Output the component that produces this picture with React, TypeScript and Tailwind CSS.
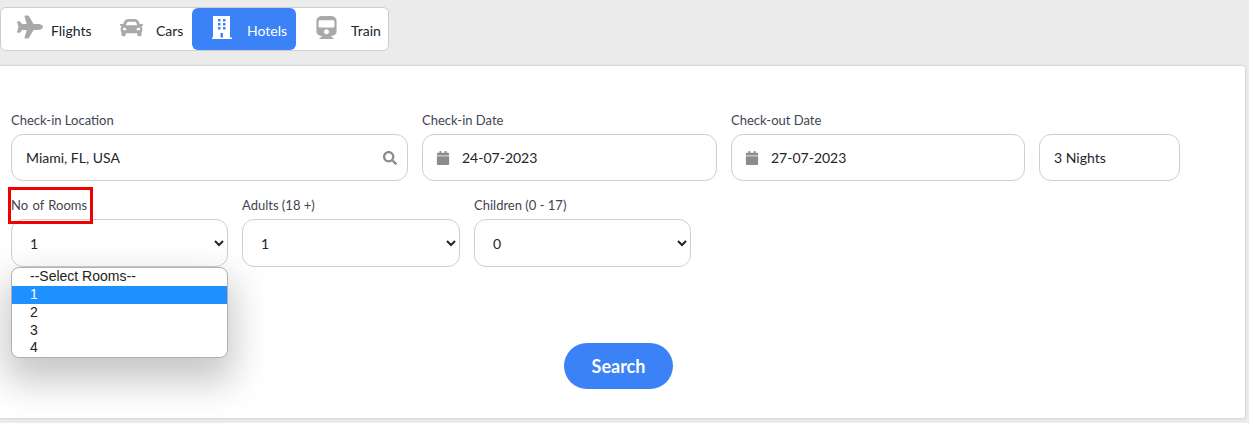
import React from "react";
import { FaPlane, FaCar, FaSearch, FaCalendar, FaTrain } from "react-icons/fa";

function HotelIcon() {
  return (
    <svg width="20" height="23" viewBox="0 0 20 23" fill="currentColor">
      <path
        fillRule="evenodd"
        d="M1 0h17v21.500h2V23H0v-1.500h1z M6 3v2.500h2.500V3z M11 3v2.500h2.500V3z M6 7v2.500h2.500V7z M11 7v2.500h2.500V7z M6 11v2.500h2.500V11z M11 11v2.500h2.500V11z M8.500 17v4.500H11V17z"
      />
    </svg>
  );
}

function Tab({
  icon,
  label,
  active,
  w,
  pl,
  iconW,
}: {
  icon: React.ReactNode;
  label: string;
  active?: boolean;
  w: string;
  pl: string;
  iconW: string;
}) {
  return (
    <div className={`flex h-[42px] items-center rounded-md ${w} ${pl} ${active ? "bg-[#3b82f6] text-white" : "text-[#212529]"}`}>
      <span className={`flex ${iconW} -translate-y-[2px] ${active ? "text-white" : "text-[#a9a9a9]"}`}>{icon}</span>
      <span className="mt-[3px] text-[14px] leading-none">{label}</span>
    </div>
  );
}

function Label({ children }: { children: React.ReactNode }) {
  return <div className="mb-[7px] h-[14px] text-[13px] leading-[15px] text-[#3f4550]">{children}</div>;
}

function DateField({ label, value, w }: { label: string; value: string; w: string }) {
  return (
    <div className={w}>
      <Label>{label}</Label>
      <div className="flex h-[47px] items-center rounded-[12px] border border-[#cfcfcf] pl-[13px] text-[14px] text-[#212529]">
        <FaCalendar className="mr-[12px] text-[#8c8c8c]" size={14} />
        <span>{value}</span>
      </div>
    </div>
  );
}

function SelectField({ label, value, w, options }: { label: React.ReactNode; value: string; w: string; options: string[] }) {
  return (
    <div className={w}>
      <Label>{label}</Label>
      <select
        defaultValue={value}
        className="h-[48px] w-full rounded-[12px] border border-[#cfcfcf] bg-white pl-[14px] pr-[1px] font-['Lato',sans-serif] text-[14px] text-[#212529] outline-none [appearance:auto]"
      >
        {options.map((o) => (
          <option key={o}>{o}</option>
        ))}
      </select>
    </div>
  );
}

export default function App() {
  return (
    <div className="relative h-[423px] w-[1249px] overflow-hidden bg-[#ebebeb] font-['Lato',sans-serif]">
      <div className="pt-[7px]">
        <div className="flex h-[44px] w-[389px] items-center rounded-md border border-[#cdcdcd] bg-white">
          <Tab w="w-[99px]" pl="pl-[16px]" iconW="w-[34px]" icon={<FaPlane size={26} />} label="Flights" />
          <Tab w="w-[92px]" pl="pl-[20px]" iconW="w-[36px]" icon={<FaCar size={23} />} label="Cars" />
          <Tab w="w-[104px]" pl="pl-[20px]" iconW="w-[35px]" active icon={<HotelIcon />} label="Hotels" />
          <Tab w="w-[92px]" pl="pl-[19px]" iconW="w-[36px]" icon={<FaTrain size={23} />} label="Train" />
        </div>
      </div>

      <div className="relative mt-[15px] h-[352px] w-[1245px] rounded-r-[3px] bg-white px-[11px] pt-[47px] shadow-[0_0_3px_rgba(0,0,0,0.2)]">
        <div className="flex gap-[14px]">
          <div className="w-[397px]">
            <Label>Check-in Location</Label>
            <div className="flex h-[47px] items-center justify-between rounded-[12px] border border-[#cfcfcf] pl-[14px] pr-[10px] text-[14px] text-[#212529]">
              <span>Miami, FL, USA</span>
              <FaSearch className="text-[#8c8c8c]" size={14} />
            </div>
          </div>
          <DateField w="w-[295px]" label="Check-in Date" value="24-07-2023" />
          <DateField w="w-[294px]" label="Check-out Date" value="27-07-2023" />
          <div className="w-[141px] pt-[21px]">
            <div className="flex h-[47px] items-center rounded-[12px] border border-[#cfcfcf] pl-[14px] text-[14px] text-[#212529]">3 Nights</div>
          </div>
        </div>

        <div className="mt-[17px] flex gap-[14px]">
          <SelectField
            w="w-[217px]"
            label={<span className="[word-spacing:1px]">No of Rooms</span>}
            value="1"
            options={["--Select Rooms--", "1", "2", "3", "4"]}
          />
          <SelectField w="w-[218px]" label="Adults (18 +)" value="1" options={["1", "2", "3", "4"]} />
          <SelectField w="w-[217px]" label="Children (0 - 17)" value="0" options={["0", "1", "2", "3"]} />
        </div>

        <div className="mt-[76px] flex justify-center pr-[8px]">
          <button className="h-[46px] w-[109px] rounded-full bg-[#3b82f6] text-[18px] font-bold text-white">Search</button>
        </div>

        {/* red annotation */}
        <div className="absolute left-[8px] top-[121px] h-[37px] w-[85px] border-[3px] border-[#f00000]" />

        {/* open dropdown list */}
        <div className="absolute left-[11px] top-[201px] w-[217px] overflow-hidden rounded-[8px] border border-[#b0b0b0] bg-white font-['Liberation_Sans',sans-serif] text-[14px] leading-[17.500px] text-[#222] shadow-[0_18px_36px_6px_rgba(0,0,0,0.22)]">
          <div className="h-[18px] pl-[18px] leading-[17px]">--Select Rooms--</div>
          <div className="h-[18px] bg-[#1e90ff] pl-[18px] leading-[17px] text-white">1</div>
          <div className="pl-[18px]">2</div>
          <div className="pl-[18px]">3</div>
          <div className="pl-[18px]">4</div>
        </div>
      </div>
    </div>
  );
}
